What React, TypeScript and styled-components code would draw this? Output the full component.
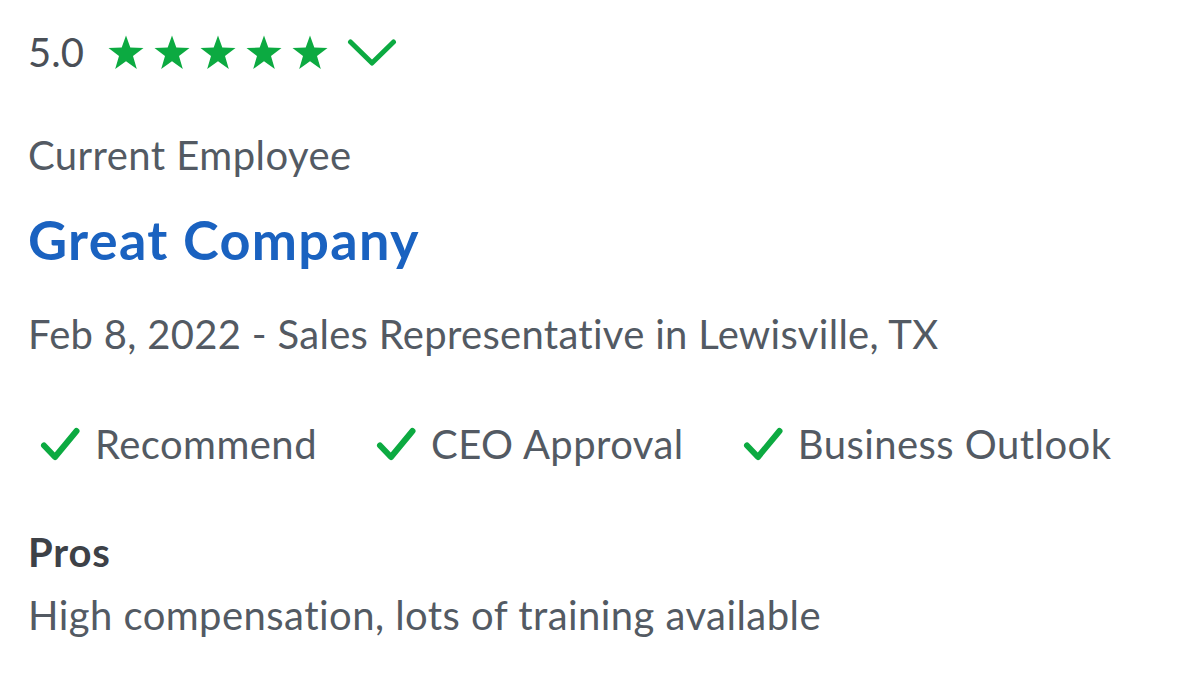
import React from "react";
import styled, { createGlobalStyle } from "styled-components";

const Global = createGlobalStyle`
  html, body { margin: 0; padding: 0; background: #ffffff; }
  body { font-family: Lato, "Open Sans", sans-serif; }
`;

const Card = styled.div`
  width: 1200px;
  height: 675px;
  box-sizing: border-box;
  padding: 30px 28px 0;
  display: flex;
  flex-direction: column;
  align-items: flex-start;
  color: #535a63;
  font-family: Lato, sans-serif;
  font-variant-ligatures: none;
`;

const RatingRow = styled.div`
  display: flex;
  align-items: center;
  height: 44px;
`;

const Score = styled.span`
  font-size: 40px;
  line-height: 44px;
  color: #4a4f57;
  margin-right: 24px;
`;

const Stars = styled.div`
  display: flex;
  gap: 10px;
  align-items: center;
`;

const Chevron = styled.svg`
  margin-left: 19px;
`;

const BodyText = styled.div`
  font-size: 40px;
  line-height: 48px;
  letter-spacing: 0.45px;
  color: #535a63;
`;

const Status = styled(BodyText)`
  margin-top: 57px;
`;

const Title = styled.a`
  margin-top: 29px;
  font-size: 54px;
  line-height: 64px;
  font-weight: 700;
  letter-spacing: 1.3px;
  color: #1a62c0;
  text-decoration: none;
`;

const Meta = styled(BodyText)`
  margin-top: 38px;
  letter-spacing: 0.3px;
`;

const Checks = styled.div`
  display: flex;
  margin-top: 62px;
  padding-left: 12px;
  gap: 59px;
`;

const CheckItem = styled(BodyText)`
  display: flex;
  align-items: center;
  gap: 15px;
`;

const SectionLabel = styled.div`
  margin-top: 60px;
  font-size: 40px;
  line-height: 48px;
  font-weight: 700;
  letter-spacing: 0.8px;
  color: #3d4147;
`;

const SectionText = styled(BodyText)`
  margin-top: 15px;
`;

const GREEN = "#0caa41";

const Star = () => (
  <svg width="36" height="35" viewBox="0 0 36 35">
    <polygon
      points="18,0.5 22.3,12.6 35.5,12.9 25,21 28.8,34 18,26.3 7.2,34 11,21 0.5,12.9 13.7,12.6"
      fill={GREEN}
    />
  </svg>
);

const Check = () => (
  <svg width="40" height="34" viewBox="0 0 40 34">
    <path
      d="M4 18.5l11 11.5L36.5 4"
      fill="none"
      stroke={GREEN}
      strokeWidth="6"
      strokeLinecap="round"
      strokeLinejoin="round"
    />
  </svg>
);

const items = ["Recommend", "CEO Approval", "Business Outlook"];

export default function App() {
  return (
    <>
      <Global />
      <Card>
        <RatingRow>
          <Score>5.0</Score>
          <Stars>
            {[0, 1, 2, 3, 4].map((i) => (
              <Star key={i} />
            ))}
          </Stars>
          <Chevron width="50" height="30" viewBox="0 0 50 30">
            <path
              d="M3.5 5l21.5 21L46.5 5"
              fill="none"
              stroke={GREEN}
              strokeWidth="5"
              strokeLinecap="round"
              strokeLinejoin="round"
            />
          </Chevron>
        </RatingRow>
        <Status>Current Employee</Status>
        <Title href="#">Great Company</Title>
        <Meta>Feb 8, 2022 - Sales Representative in Lewisville, TX</Meta>
        <Checks>
          {items.map((t) => (
            <CheckItem key={t}>
              <Check />
              {t}
            </CheckItem>
          ))}
        </Checks>
        <SectionLabel>Pros</SectionLabel>
        <SectionText>High compensation, lots of training available</SectionText>
      </Card>
    </>
  );
}
